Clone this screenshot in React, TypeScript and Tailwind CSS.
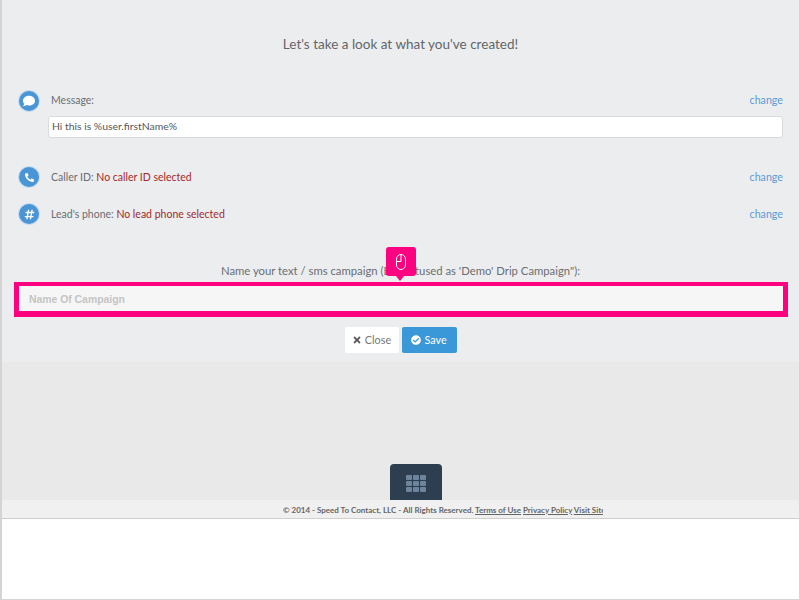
import { FaComment, FaPhone, FaHashtag, FaTimes, FaCheckCircle } from "react-icons/fa";

const font = { fontFamily: "Lato, 'Liberation Sans', sans-serif" };

function Circle({ children }: { children: React.ReactNode }) {
  return (
    <div className="ml-[1px] w-[20px] h-[20px] rounded-full bg-[#4a95d6] ring-1 ring-[#c9dcee] flex items-center justify-center text-white text-[11px] shrink-0">
      {children}
    </div>
  );
}

function Row({ icon, label, value }: { icon: React.ReactNode; label: string; value: string }) {
  return (
    <div className="flex items-center h-[22px]">
      <Circle>{icon}</Circle>
      <div className="ml-[12px] pt-[2px] text-[10.5px] text-[#6b6e72]">
        {label} <span className="text-[#a32a2a]">{value}</span>
      </div>
      <a className="ml-auto text-[10.7px] text-[#5a9bd8]">change</a>
    </div>
  );
}

export default function App() {
  return (
    <div className="w-[800px] h-[600px] bg-white flex flex-col overflow-hidden border-l-2 border-r border-b border-[#d4d4d6]" style={font}>
      <div className="h-[519px] flex flex-col shrink-0">
        <div className="h-[362px] bg-[#ecedef] pt-[36px] px-[16px] relative">
          <div className="text-center text-[13.5px] leading-[16px] text-[#62666a]">Let's take a look at what you've created!</div>

          <div className="mt-[38px]">
            <div className="flex items-center h-[22px]">
              <Circle><FaComment className="text-[12px]" /></Circle>
              <div className="ml-[12px] text-[10.5px] text-[#6b6e72]">Message:</div>
              <a className="ml-auto text-[10.7px] text-[#5a9bd8] -mt-[1px]">change</a>
            </div>
            <div className="ml-[30px] mt-[4px] h-[22px] bg-white rounded-[3px] border border-[#d9dadc] flex items-center px-[3px] text-[10.4px] text-[#55585c]">
              Hi this is %user.firstName%
            </div>
          </div>

          <div className="mt-[28px]"><Row icon={<FaPhone className="rotate-90 text-[9px]" />} label="Caller ID:" value="No caller ID selected" /></div>
          <div className="mt-[15px]"><Row icon={<FaHashtag />} label="Lead's phone:" value="No lead phone selected" /></div>

          <div className="mt-[39px] text-center text-[11.3px] leading-[14px] text-[#6b6e72]">
            Name your text / sms campaign (Be Statused as 'Demo' Drip Campaign"):
          </div>
          <div className="-ml-[4px] -mr-[5px] mt-[4px] h-[35px] border-x-[5px] border-t-[4px] border-b-[6px] border-[#ff0080] bg-[#f6f6f6] flex items-center px-[10px] pt-[2px]">
            <span className="text-[10.4px] font-bold text-[#c4c4c4]" style={{ fontFamily: "'Liberation Sans', sans-serif" }}>Name Of Campaign</span>
          </div>
          <div className="flex justify-center gap-[3px] mt-[10px]">
            <button className="h-[26px] w-[54px] bg-white rounded-[2px] text-[10.8px] text-[#777] flex items-center justify-center gap-[3px]">
              <FaTimes className="text-[10px] text-[#555]" /> Close
            </button>
            <button className="h-[26px] w-[55px] bg-[#3a97d8] rounded-[2px] text-[10.8px] text-white flex items-center justify-center gap-[3px]">
              <FaCheckCircle className="text-[10px]" /> Save
            </button>
          </div>

          <div className="absolute left-[384px] top-[247px] w-[30px] h-[29px] bg-[#ff0080] rounded-[3px] flex items-center justify-center">
            <svg width="10" height="16" viewBox="0 0 10 16" fill="none" stroke="white" strokeWidth="1">
              <rect x="0.5" y="0.5" width="9" height="15" rx="4.5" />
              <path d="M5 0.5V7.5H0.5" />
            </svg>
            <div className="absolute left-[10px] top-[29px] w-0 h-0 border-x-[4px] border-x-transparent border-t-[5px] border-t-[#ff0080]" />
          </div>
        </div>

        <div className="h-[138px] bg-[#e9e9e9] flex items-end pl-[388px]">
          <div className="w-[52px] h-[36px] bg-[#2c3e50] rounded-t-[4px] flex items-start justify-center pt-[11px]">
            <div className="grid grid-cols-3 gap-[1px]">
              {Array.from({ length: 9 }).map((_, i) => (
                <div key={i} className="w-[6px] h-[5px] rounded-[1px] bg-[#6e849c]" />
              ))}
            </div>
          </div>
        </div>

        <div className="h-[19px] bg-[#f0f0f0] border-b border-[#cfcfcf] flex items-center pl-[281px] pt-[1px]">
          <div className="w-[320px] overflow-hidden whitespace-nowrap text-[8px] font-bold text-[#666]">
            © 2014 - Speed To Contact, LLC - All Rights Reserved. <span className="underline">Terms of Use</span> <span className="underline">Privacy Policy</span> <span className="underline">Visit Site</span>
          </div>
        </div>
      </div>
    </div>
  );
}
